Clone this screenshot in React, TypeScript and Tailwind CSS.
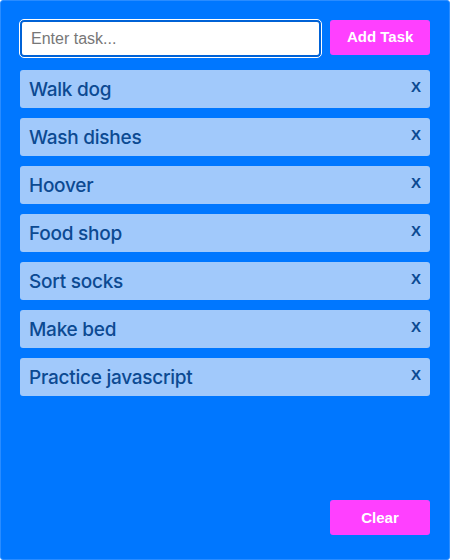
import React, { useState } from "react";

const initialTasks = [
  "Walk dog",
  "Wash dishes",
  "Hoover",
  "Food shop",
  "Sort socks",
  "Make bed",
  "Practice javascript",
];

const App = () => {
  const [tasks, setTasks] = useState<string[]>(initialTasks);
  const [text, setText] = useState("");

  const addTask = () => {
    if (!text.trim()) return;
    setTasks([...tasks, text.trim()]);
    setText("");
  };

  const removeTask = (i: number) => {
    setTasks(tasks.filter((_, idx) => idx !== i));
  };

  return (
    <div className="w-[450px] h-[560px] bg-[#0077ff] border border-[#2a8cff] rounded-[3px] flex flex-col px-[19px] pt-[19px] pb-[24px] font-['Liberation_Sans',Arial,sans-serif]">
      {/* input row */}
      <div className="flex gap-[9px]">
        <input
          value={text}
          onChange={(e) => setText(e.target.value)}
          placeholder="Enter task..."
          className="w-[302px] h-[37px] bg-white rounded-[4px] border-2 border-[#0062d6] outline outline-1 outline-white px-[9px] text-[16px] text-[#333] placeholder:text-[#777] focus:outline-white"
        />
        <button
          onClick={addTask}
          className="w-[100px] h-[35px] bg-[#ff40ff] rounded-[3px] text-white font-bold text-[15px]"
        >
          Add Task
        </button>
      </div>

      {/* task list */}
      <ul className="flex flex-col gap-[10px] mt-[13px]">
        {tasks.map((task, i) => (
          <li
            key={i}
            className="h-[38px] bg-[#a1c9fb] rounded-[3px] flex items-center justify-between pl-[9px] pr-[9px]"
          >
            <span className="text-[19px] text-[#0c4a92] font-medium font-['Inter',sans-serif] tracking-[-0.25px] pt-[2px]">{task}</span>
            <button
              onClick={() => removeTask(i)}
              className="text-[#0c4a92] font-bold text-[15px] -mt-[3px]"
            >
              X
            </button>
          </li>
        ))}
      </ul>

      <div className="mt-auto flex justify-end">
        <button
          onClick={() => setTasks([])}
          className="w-[100px] h-[35px] bg-[#ff40ff] rounded-[3px] text-white font-bold text-[15px] pt-[1px]"
        >
          Clear
        </button>
      </div>
    </div>
  );
};

export default App;
